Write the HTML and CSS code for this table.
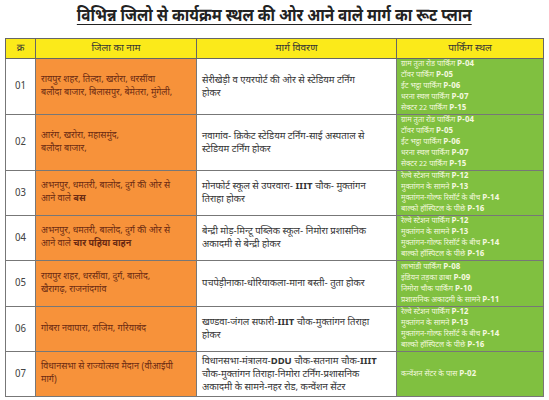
FILE: index.html
```html
<!DOCTYPE html>
<html lang="hi">
<head>
<meta charset="utf-8">
<link rel="stylesheet" href="styles.css">
</head>
<body>
<div class="page">
  <div class="title-wrap"><h1 class="title">विभिन्न जिलो से कार्यक्रम स्थल की ओर आने वाले मार्ग का रूट प्लान</h1></div>
  <table class="plan">
    <colgroup>
      <col class="c-num"><col class="c-dist"><col class="c-route"><col class="c-park">
    </colgroup>
    <thead>
      <tr><th>क्र</th><th>जिला का नाम</th><th>मार्ग विवरण</th><th>पार्किंग स्थल</th></tr>
    </thead>
    <tbody>
      <tr class="r1">
        <td class="num">01</td>
        <td class="dist">रायपुर शहर, तिल्दा, खरोरा, धरसींवा<br>बलौदा बाजार, बिलासपुर, बेमेतरा, मुंगेली,</td>
        <td class="route">सेरीखेड़ी व एयरपोर्ट की ओर से स्टेडियम टर्निंग<br>होकर</td>
        <td class="park">ग्राम तुता रोड पार्किंग <b>P-04</b><br>टॉवर पार्किंग <b>P-05</b><br>ईंट भट्ठा पार्किंग <b>P-06</b><br>धरना स्थल पार्किंग <b>P-07</b><br>सेक्टर 22 पार्किंग <b>P-15</b></td>
      </tr>
      <tr class="r2">
        <td class="num">02</td>
        <td class="dist">आरंग, खरोरा, महासमुंद,<br>बलौदा बाजार,</td>
        <td class="route">नवागांव- क्रिकेट स्टेडियम टर्निंग-साई अस्पताल से<br>स्टेडियम टर्निंग होकर</td>
        <td class="park">ग्राम तुता रोड पार्किंग <b>P-04</b><br>टॉवर पार्किंग <b>P-05</b><br>ईंट भट्ठा पार्किंग <b>P-06</b><br>धरना स्थल पार्किंग <b>P-07</b><br>सेक्टर 22 पार्किंग <b>P-15</b></td>
      </tr>
      <tr class="r3">
        <td class="num">03</td>
        <td class="dist">अभनपुर, धमतरी, बालोद, दुर्ग की ओर से<br>आने वाले <b>बस</b></td>
        <td class="route">मोनफोर्ट स्कूल से उपरवारा- <b>IIIT</b> चौक- मुक्तांगन<br>तिराहा होकर</td>
        <td class="park">रेल्वे स्टेशन पार्किंग <b>P-12</b><br>मुक्तांगन के सामने <b>P-13</b><br>मुक्तांगन-गोल्फ रिसॉर्ट के बीच <b>P-14</b><br>बाल्को हॉस्पिटल के पीछे <b>P-16</b></td>
      </tr>
      <tr class="r4">
        <td class="num">04</td>
        <td class="dist">अभनपुर, धमतरी, बालोद, दुर्ग की ओर से<br>आने वाले <b>चार पहिया वाहन</b></td>
        <td class="route">बेन्द्री मोड़-मिन्टू पब्लिक स्कूल- निमोरा प्रशासनिक<br>अकादमी से बेन्द्री होकर</td>
        <td class="park">रेल्वे स्टेशन पार्किंग <b>P-12</b><br>मुक्तांगन के सामने <b>P-13</b><br>मुक्तांगन-गोल्फ रिसॉर्ट के बीच <b>P-14</b><br>बाल्को हॉस्पिटल के पीछे <b>P-16</b></td>
      </tr>
      <tr class="r5">
        <td class="num">05</td>
        <td class="dist">रायपुर शहर, धरसींवा, दुर्ग, बालोद,<br>खैरागढ़, राजनांदगांव</td>
        <td class="route">पचपेड़ीनाका-धोरियाकला-माना बस्ती- तुता होकर</td>
        <td class="park">लाभांडी पार्किंग <b>P-08</b><br>इंडियन तड़का ढाबा <b>P-09</b><br>निमोरा चौक पार्किंग <b>P-10</b><br>प्रशासनिक अकादमी के सामने <b>P-11</b></td>
      </tr>
      <tr class="r6">
        <td class="num">06</td>
        <td class="dist">गोबरा नवापारा, राजिम, गरियाबंद</td>
        <td class="route">खण्डवा-जंगल सफारी-<b>IIIT</b> चौक-मुक्तांगन तिराहा<br>होकर</td>
        <td class="park">रेल्वे स्टेशन पार्किंग <b>P-12</b><br>मुक्तांगन के सामने <b>P-13</b><br>मुक्तांगन-गोल्फ रिसॉर्ट के बीच <b>P-14</b><br>बाल्को हॉस्पिटल के पीछे <b>P-16</b></td>
      </tr>
      <tr class="r7">
        <td class="num">07</td>
        <td class="dist">विधानसभा से राज्योत्सव मैदान (वीआईपी<br>मार्ग)</td>
        <td class="route">विधानसभा-मंत्रालय-<b>DDU</b> चौक-सतनाम चौक-<b>IIIT</b><br>चौक-मुक्तांगन तिराहा-निमोरा टर्निंग-प्रशासनिक<br>अकादमी के सामने-नहर रोड, कन्वेंशन सेंटर</td>
        <td class="park">कन्वेंशन सेंटर के पास <b>P-02</b></td>
      </tr>
    </tbody>
  </table>
</div>
</body>
</html>
```

FILE: styles.css
```css
html, body {
  margin: 0;
  padding: 0;
  background: #ffffff;
}
body {
  font-family: "Noto Sans Devanagari", "Lohit Devanagari", "Noto Sans", "Liberation Sans", sans-serif;
  color: #333;
}
.page {
  width: 549px;
  height: 400px;
  padding: 4px 6px 0 5px;
  box-sizing: border-box;
  overflow: hidden;
}
.title-wrap {
  height: 33px;
  display: flex;
  justify-content: center;
  margin-bottom: 1px;
}
.title {
  margin: 0;
  font-size: 18px;
  line-height: 26px;
  font-weight: 700;
  white-space: nowrap;
  text-decoration: underline;
  text-decoration-thickness: 1px;
  text-underline-offset: 3px;
  color: #222;
  transform: scaleX(0.85);
  transform-origin: center top;
}
.plan {
  width: 538px;
  border-collapse: collapse;
  table-layout: fixed;
  border: 1px solid #555;
}
.c-num { width: 30px; }
.c-dist { width: 161px; }
.c-route { width: 200px; }
.c-park { width: 147px; }
.plan th {
  background: #fbea1a;
  height: 19px;
  padding: 0;
  font-size: 10px;
  line-height: 12px;
  font-weight: 400;
  color: #333;
  border: 1px solid #666;
  text-align: center;
  vertical-align: middle;
}
.plan td {
  border: 1px solid #777;
  padding: 0 0 0 5px;
  vertical-align: middle;
  font-size: 9px;
  line-height: 13px;
  white-space: nowrap;
  overflow: hidden;
}
.plan td b {
  line-height: 0;
}
.plan td.num {
  text-align: center;
  padding: 0;
  font-size: 10px;
  color: #444;
}
.plan td.dist {
  background: #f7923a;
  color: #6a2a12;
}
.plan td.route {
  color: #333;
  font-size: 9.5px;
}
.plan td.park {
  background: #80c040;
  color: #f3f8df;
  font-size: 7.5px;
  line-height: 11px;
  padding-left: 4px;
}
.plan td.park b {
  font-size: 8px;
}
.r1 td { height: 55px; }
.r2 td { height: 54px; }
.r3 td { height: 44px; }
.r4 td { height: 44px; }
.r5 td { height: 45px; }
.r6 td { height: 42px; }
.r7 td { height: 44px; }
```
